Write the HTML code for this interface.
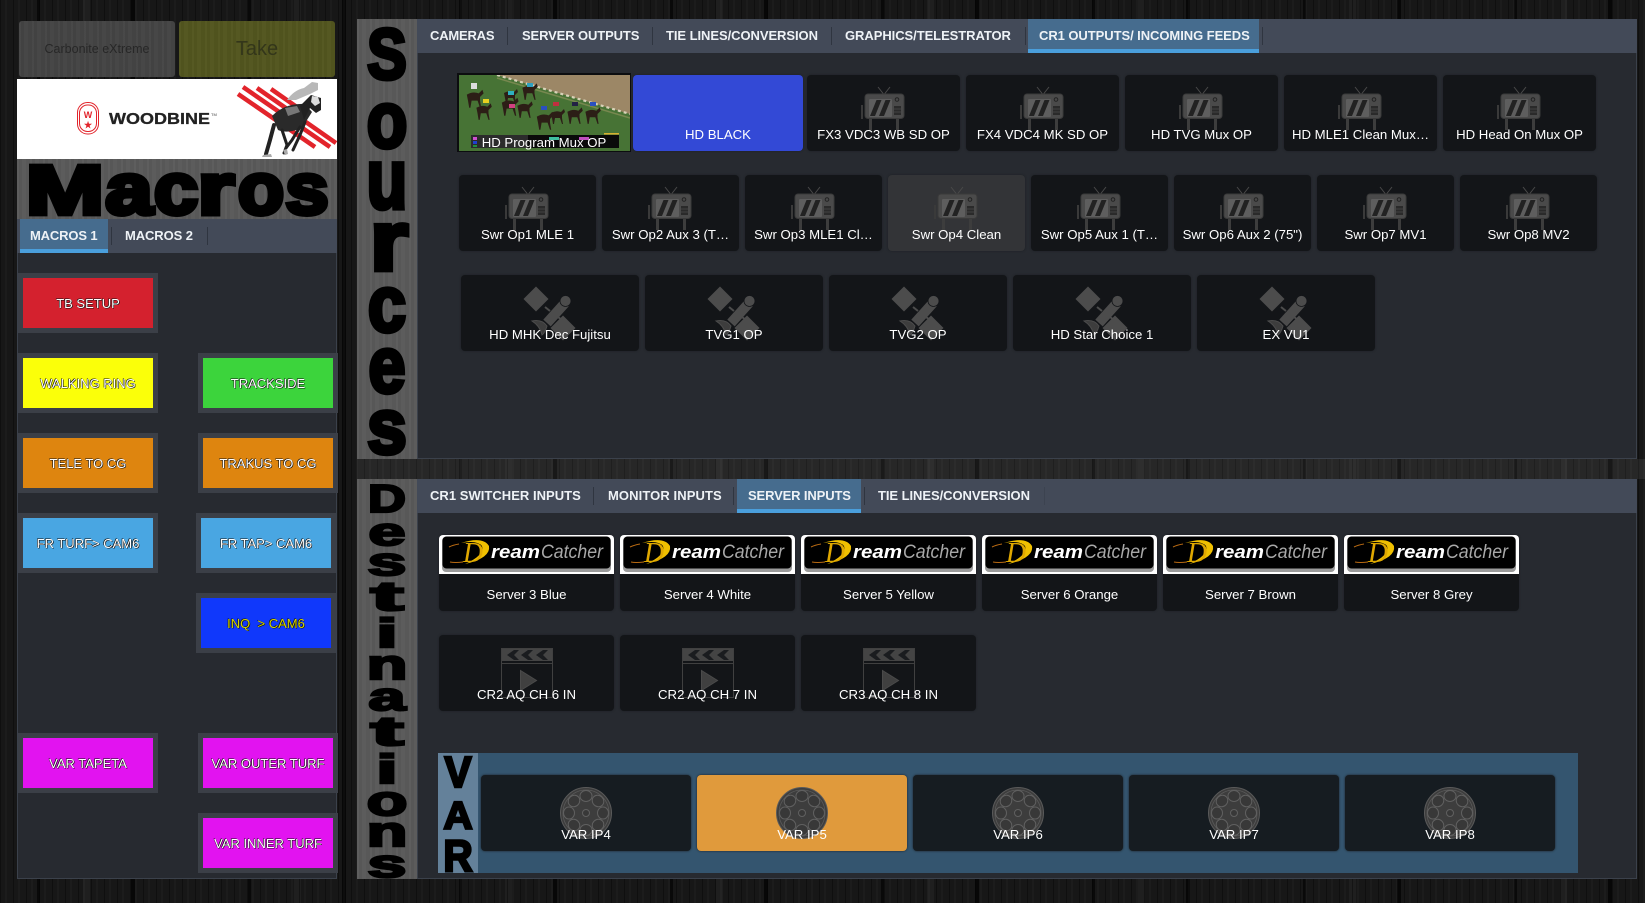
<!DOCTYPE html>
<html lang="en"><head><meta charset="utf-8"><title>Router</title>
<style>
html,body{margin:0;padding:0}
body{position:relative;width:1645px;height:903px;overflow:hidden;font-family:"Liberation Sans",sans-serif;background-color:#171717;
background-image:
repeating-linear-gradient(90deg,rgba(0,0,0,.35) 0 1px,rgba(0,0,0,0) 1px 5px,rgba(255,255,255,.025) 5px 7px,rgba(0,0,0,0) 7px 13px),
repeating-linear-gradient(90deg,rgba(0,0,0,0) 0 37px,rgba(0,0,0,.6) 37px 40px,rgba(0,0,0,0) 40px 83px,rgba(255,255,255,.035) 83px 90px,rgba(0,0,0,0) 90px 131px,rgba(0,0,0,.7) 131px 135px,rgba(0,0,0,0) 135px 211px)}
div,span,svg{box-sizing:border-box}
.a{position:absolute}
.wood{background-color:#5a5a5a;background-image:repeating-linear-gradient(90deg,rgba(255,255,255,.025) 0 2px,rgba(0,0,0,.03) 2px 5px,rgba(255,255,255,.012) 5px 9px,rgba(0,0,0,.025) 9px 13px)}
.grain{background-image:repeating-linear-gradient(90deg,rgba(255,255,255,.02) 0 2px,rgba(0,0,0,.04) 2px 5px,rgba(255,255,255,.012) 5px 9px,rgba(0,0,0,.03) 9px 13px)}
.bar{position:absolute;background:#434a58}
.panel{position:absolute;background:#272a30;border:1px solid #3b414b;border-top:0}
.tab{position:absolute;top:8px;font-weight:bold;font-size:13px;line-height:18px;color:#eef2f6;white-space:nowrap}
.sep{position:absolute;top:8px;width:1px;height:18px;background:#2f3540}
.act{position:absolute;top:0;height:34px;background:#466c8e;border-bottom:4px solid #4a9fdc}
.t{position:absolute;height:76px;background:#131518;border-radius:4px;box-shadow:0 0 2px #1c1f24;overflow:hidden}
.t b{position:absolute;left:0;right:0;top:52px;font-weight:normal;font-size:13.200px;line-height:16px;color:#fff;text-align:center;white-space:nowrap}
.t svg{position:absolute;left:50%}
.tv{width:48px;height:46px;margin-left:-23.500px;top:11px}
.sat{width:60px;height:68px;margin-left:-30px;top:0}
.cl{width:56px;height:54px;margin-left:-28px;top:12px}
.re{width:60px;height:60px;margin-left:-30px;top:8px}
.m{position:absolute;width:140px;height:60px;background:#3b3f47;padding:5px}
.m span{display:block;height:50px;line-height:51px;text-align:center;font-size:13px;color:#fff;white-space:nowrap;text-shadow:.6px .6px 0 #111,-.6px -.6px 0 #111}
</style></head>
<body>
<svg width="0" height="0" style="position:absolute">
<defs>
<symbol id="tv" viewBox="0 0 48 46">
<path d="M18 1l5.500 7M30 1l-5.500 7" stroke="#4a4a4a" stroke-width="1" fill="none"/>
<rect x="1" y="19" width="2" height="14" fill="#3a3a3a"/>
<rect x="9" y="32" width="3" height="12" fill="#3d3d3d"/><rect x="36" y="32" width="3" height="12" fill="#3d3d3d"/>
<rect x="5" y="8" width="39" height="24.500" rx="3" fill="#4a4a4a" stroke="#3a3a3a"/>
<rect x="9" y="13" width="23" height="18" rx="1" fill="#5e5e5e"/>
<path d="M10 30l6.500-16h5l-6.500 16zM19 30l6.500-16h5l-6.500 16z" fill="#222"/>
<circle cx="37" cy="13.500" r="1.800" fill="none" stroke="#222" stroke-width="1"/>
<rect x="34" y="20" width="7" height="9" fill="#2a2a2a"/><path d="M34 23h7M34 26h7" stroke="#4a4a4a" stroke-width=".8"/>
</symbol>
<symbol id="sat" viewBox="0 0 60 68">
<path d="M16 11.500l12.500 12.500l-12.500 12.500l-12.500-12.500z" fill="#4c4c4c"/>
<path d="M43 40.500l12.500 12.500l-12.500 12.500l-12.500-12.500z" fill="#4c4c4c"/>
<path d="M27 48L45 28" stroke="#4c4c4c" stroke-width="10" fill="none"/>
<circle cx="45.500" cy="26" r="5.500" fill="#4c4c4c" stroke="#131518" stroke-width=".8"/>
<path d="M25 32l5 4M38 42l4 3" stroke="#4c4c4c" stroke-width="2"/>
<path d="M12 46q10-2 15 5q-2 7-5 9q-2-9-10-14z" fill="#3d3d3d" stroke="#4c4c4c"/>
</symbol>
<symbol id="cl" viewBox="0 0 56 54">
<rect x="2.500" y="1.500" width="51" height="49" fill="none" stroke="#404040"/>
<rect x="3" y="2" width="50" height="12" fill="#444"/>
<path d="M15 3l-7 5 7 5h5l-5-5 5-5zM29 3l-7 5 7 5h5l-5-5 5-5zM44 3l-7 5 7 5h5l-5-5 5-5z" fill="#1a1c1f"/>
<path d="M3 16.500h50" stroke="#404040"/>
<path d="M21.500 23.500l16 10-16 10z" fill="#404040" stroke="#4a4a4a"/>
</symbol>
<symbol id="re" viewBox="0 0 60 60">
<circle cx="30" cy="30" r="25.500" fill="#3d3d3d" stroke="#5a5a5a"/>
<circle cx="30" cy="30" r="23" fill="none" stroke="#5a5a5a" stroke-width=".8"/>
<g fill="#383838" stroke="#606060" stroke-width="1">
<ellipse cx="30" cy="13" rx="6" ry="5.500"/><ellipse cx="42" cy="18" rx="6" ry="5.500" transform="rotate(45 42 18)"/><ellipse cx="47" cy="30" rx="5.500" ry="6"/><ellipse cx="42" cy="42" rx="6" ry="5.500" transform="rotate(-45 42 42)"/>
<ellipse cx="30" cy="47" rx="6" ry="5.500"/><ellipse cx="18" cy="42" rx="6" ry="5.500" transform="rotate(45 18 42)"/><ellipse cx="13" cy="30" rx="5.500" ry="6"/><ellipse cx="18" cy="18" rx="6" ry="5.500" transform="rotate(-45 18 18)"/>
</g>
<circle cx="30" cy="30" r="3.500" fill="#383838" stroke="#606060"/>
</symbol>
<symbol id="dc" viewBox="0 0 175 39">
<rect width="175" height="39" fill="#fff"/>
<rect x="3" y="2" width="169" height="35" rx="4" fill="#9a9a9a"/>
<rect x="3.500" y="1.500" width="168" height="32" rx="4" fill="#000"/>
<path d="M20 9q-6 1-10 3M24 27q-8 1-13 0" stroke="#b96a12" stroke-width="1" fill="none"/>
<path d="M22 8Q44 1 50 11Q52 23 26 29Q46 20 43 11Q38 5 22 8z" fill="#f0c000"/>
<text x="24" y="27" font-family="Liberation Serif" font-style="italic" font-size="28" fill="#e0a800" textLength="20" lengthAdjust="spacingAndGlyphs">D</text>
<text x="52" y="23" font-family="Liberation Sans" font-weight="bold" font-style="italic" font-size="18" fill="#fff" textLength="49" lengthAdjust="spacingAndGlyphs">ream</text>
<text x="102" y="23" font-family="Liberation Sans" font-style="italic" font-size="19" fill="#a8a8a8" textLength="62" lengthAdjust="spacingAndGlyphs">Catcher</text>
</symbol>
<symbol id="hs" viewBox="0 0 16 20">
<path d="M2 8q5-3 10-1l3-3 1 3-3 3v3l1 6h-1l-2-6H6l-1 6H4l-1-6z" fill="#2c1e16"/>
</symbol>
</defs>
</svg>

<!-- lighter wood band between panels -->
<div class="a" style="left:357px;top:459px;width:1288px;height:20px;background:rgba(255,255,255,.07)"></div>

<!-- top buttons -->
<div class="a grain" style="left:19px;top:21px;width:156px;height:56px;background-color:#454545;border-radius:3px;text-align:center;line-height:56px;font-size:12.500px;color:#272727">Carbonite eXtreme</div>
<div class="a grain" style="left:179px;top:21px;width:156px;height:56px;background-color:#53561f;border-radius:3px;text-align:center;line-height:56px;font-size:20px;color:#33361a">Take</div>

<!-- woodbine banner -->
<svg class="a" style="left:17px;top:79px" width="320" height="80" viewBox="17 79 320 80">
<rect x="17" y="79" width="320" height="80" fill="#fff"/>
<rect x="77.500" y="102.500" width="21" height="31.500" rx="10" fill="none" stroke="#e2242b" stroke-width="1"/>
<rect x="79.500" y="105" width="17" height="26.500" rx="8" fill="none" stroke="#e2242b" stroke-width="1"/>
<text x="88" y="118" font-size="9" font-weight="bold" fill="#e2242b" text-anchor="middle">W</text>
<text x="88" y="128" font-size="9" font-weight="bold" fill="#e2242b" text-anchor="middle">★</text>
<text x="109" y="124" font-family="Liberation Sans" font-size="15.500" font-weight="bold" fill="#222" stroke="#222" stroke-width=".3" textLength="101" lengthAdjust="spacingAndGlyphs">WOODBINE</text>
<text x="211" y="116" font-size="4" fill="#444">TM</text>
<g stroke="#e2242b" stroke-width="4.500" fill="none">
<path d="M238 94L315 147M243 87L330 147M257 88L336 143M271 89L304 112"/>
</g>
<path d="M272 116Q285 103 305 104L312 112L302 128Q288 134 278 130Z" fill="#2a2a2a"/>
<path d="M300 106L311 95L321 98L321 110L316 113L310 108L304 120Z" fill="#222"/>
<path d="M312 96l6 1 2 6-5 3-4-4z" fill="#ddd"/>
<g stroke="#222" fill="none" stroke-linecap="round">
<path d="M274 125L270 140L266 154" stroke-width="4"/>
<path d="M282 130L287 145L284 153" stroke-width="3"/>
<path d="M300 127L292 140L286 148" stroke-width="3"/>
<path d="M305 122L300 135L293 150" stroke-width="3"/>
</g>
<path d="M287 100Q294 90 304 88L312 82L318 83L318 90L310 94L296 100Z" fill="#b8b8b8"/>
<path d="M283 150l2 5 3-1-1-5zM263 155l8-1 1 3-10 0z" fill="#aaa"/>
<path d="M285 108l12-2 3 6-12 4z" fill="#777"/>
</svg>

<!-- macros heading -->
<div class="a wood" style="left:17px;top:159px;width:320px;height:60px"></div>

<!-- macros panel -->
<div class="bar" style="left:17px;top:219px;width:320px;height:34px">
<div class="act" style="left:3px;width:88px"></div>
<span class="tab" style="left:13px;letter-spacing:-.15px">MACROS 1</span>
<div class="sep" style="left:94px"></div>
<span class="tab" style="left:108px;letter-spacing:-.1px">MACROS 2</span>
<div class="sep" style="left:190px"></div>
</div>
<div class="panel" style="left:17px;top:253px;width:320px;height:626px"></div>
<div class="m" style="left:18px;top:273px"><span style="background:#d4212e">TB SETUP</span></div>
<div class="m" style="left:18px;top:353px"><span style="background:#fbff09">WALKING RING</span></div>
<div class="m" style="left:198px;top:353px"><span style="background:#3cd43c">TRACKSIDE</span></div>
<div class="m" style="left:18px;top:433px"><span style="background:#de850f">TELE TO CG</span></div>
<div class="m" style="left:198px;top:433px"><span style="background:#de850f">TRAKUS TO CG</span></div>
<div class="m" style="left:18px;top:513px"><span style="background:#49a6e2">FR TURF&gt; CAM6</span></div>
<div class="m" style="left:196px;top:513px"><span style="background:#49a6e2">FR TAP&gt; CAM6</span></div>
<div class="m" style="left:196px;top:593px"><span style="background:#1038fb;color:#d4d400">INQ &nbsp;&gt; CAM6</span></div>
<div class="m" style="left:18px;top:733px"><span style="background:#e213f0">VAR TAPETA</span></div>
<div class="m" style="left:198px;top:733px"><span style="background:#e213f0">VAR OUTER TURF</span></div>
<div class="m" style="left:198px;top:813px"><span style="background:#e213f0">VAR INNER TURF</span></div>

<!-- sources -->
<div class="a wood" style="left:357px;top:19px;width:60px;height:440px"></div>
<div class="bar" style="left:417px;top:19px;width:1220px;height:34px">
<div class="act" style="left:611px;width:231px"></div>
<span class="tab" style="left:13px;letter-spacing:-.2px">CAMERAS</span><div class="sep" style="left:90px"></div>
<span class="tab" style="left:105px;letter-spacing:-.12px">SERVER OUTPUTS</span><div class="sep" style="left:235px"></div>
<span class="tab" style="left:249px;letter-spacing:-.06px">TIE LINES/CONVERSION</span><div class="sep" style="left:414px"></div>
<span class="tab" style="left:428px;letter-spacing:-.06px">GRAPHICS/TELESTRATOR</span><div class="sep" style="left:608px"></div>
<span class="tab" style="left:622px;letter-spacing:-.06px">CR1 OUTPUTS/ INCOMING FEEDS</span><div class="sep" style="left:845px"></div>
</div>
<div class="panel" style="left:417px;top:53px;width:1220px;height:406px"></div>

<!-- thumbnail -->
<div class="a" style="left:457px;top:73px;width:174px;height:79px;background:#0c0d0f;padding:2px">
<svg width="171" height="76" viewBox="0 0 171 76" style="display:block">
<rect width="171" height="76" fill="#477335"/>
<path d="M38 0H171V39z" fill="#9c8766"/>
<path d="M38 0L171 39" stroke="#d8d2b8" stroke-width="2.200" stroke-dasharray="3 3"/>
<path d="M38 3L171 43" stroke="#77884f" stroke-width="1.500"/>
<g>
<use href="#hs" x="5" y="10" width="20" height="24"/><use href="#hs" x="15" y="24" width="18" height="22"/>
<use href="#hs" x="40" y="18" width="20" height="24"/><use href="#hs" x="42" y="10" width="18" height="20"/>
<use href="#hs" x="60" y="4" width="20" height="22"/><use href="#hs" x="56" y="22" width="18" height="22"/>
<use href="#hs" x="75" y="32" width="20" height="24"/><use href="#hs" x="90" y="28" width="16" height="24"/>
<use href="#hs" x="106" y="28" width="18" height="22"/><use href="#hs" x="124" y="28" width="18" height="22"/>
</g>
<g>
<rect x="12" y="8" width="6" height="6" fill="#ddd"/><rect x="24" y="24" width="6" height="4" fill="#e6d020"/>
<rect x="49" y="16" width="6" height="4" fill="#2fb0c0"/><rect x="50" y="29" width="6" height="4" fill="#d04080"/>
<rect x="68" y="8" width="6" height="4" fill="#2fa0c0"/><rect x="82" y="31" width="6" height="4" fill="#2a50c0"/>
<rect x="94" y="27" width="6" height="4" fill="#c03040"/><rect x="113" y="27" width="6" height="4" fill="#224"/>
<rect x="131" y="27" width="6" height="4" fill="#2a50c0"/>
</g>
<rect x="12" y="60" width="148" height="13" fill="#0a0a0a"/>
<rect x="12" y="60" width="57" height="13" fill="#2c2c2c"/>
<rect x="14" y="62" width="4" height="3" fill="#d050d0"/><rect x="14" y="66" width="4" height="3" fill="#2040d0"/><rect x="14" y="70" width="4" height="2" fill="#209040"/>
<rect x="145" y="58" width="15" height="1.500" fill="#d8b030"/>
<rect x="90" y="62" width="10" height="3" fill="#40c0a0"/><rect x="120" y="62" width="10" height="3" fill="#c050c0"/>
</svg>
<div class="a" style="left:0;right:0;top:62px;color:#fff;font-size:13.200px;line-height:16px;text-align:center;white-space:nowrap">HD Program Mux OP</div>
</div>

<!-- row 1 -->
<div class="t" style="left:633px;top:75px;width:170px;background:#3349d6"><b>HD BLACK</b></div>
<div class="t" style="left:807px;top:75px;width:153px"><svg class="tv"><use href="#tv"/></svg><b>FX3 VDC3 WB SD OP</b></div>
<div class="t" style="left:966px;top:75px;width:153px"><svg class="tv"><use href="#tv"/></svg><b>FX4 VDC4 MK SD OP</b></div>
<div class="t" style="left:1125px;top:75px;width:153px"><svg class="tv"><use href="#tv"/></svg><b>HD TVG Mux OP</b></div>
<div class="t" style="left:1284px;top:75px;width:153px"><svg class="tv"><use href="#tv"/></svg><b>HD MLE1 Clean Mux…</b></div>
<div class="t" style="left:1443px;top:75px;width:153px"><svg class="tv"><use href="#tv"/></svg><b>HD Head On Mux OP</b></div>
<!-- row 2 -->
<div class="t" style="left:459px;top:175px;width:137px"><svg class="tv"><use href="#tv"/></svg><b>Swr Op1 MLE 1</b></div>
<div class="t" style="left:602px;top:175px;width:137px"><svg class="tv"><use href="#tv"/></svg><b>Swr Op2 Aux 3 (T…</b></div>
<div class="t" style="left:745px;top:175px;width:137px"><svg class="tv"><use href="#tv"/></svg><b>Swr Op3 MLE1 Cl…</b></div>
<div class="t" style="left:888px;top:175px;width:137px;background:#333437"><svg class="tv"><use href="#tv"/></svg><b>Swr Op4 Clean</b></div>
<div class="t" style="left:1031px;top:175px;width:137px"><svg class="tv"><use href="#tv"/></svg><b>Swr Op5 Aux 1 (T…</b></div>
<div class="t" style="left:1174px;top:175px;width:137px"><svg class="tv"><use href="#tv"/></svg><b>Swr Op6 Aux 2 (75")</b></div>
<div class="t" style="left:1317px;top:175px;width:137px"><svg class="tv"><use href="#tv"/></svg><b>Swr Op7 MV1</b></div>
<div class="t" style="left:1460px;top:175px;width:137px"><svg class="tv"><use href="#tv"/></svg><b>Swr Op8 MV2</b></div>
<!-- row 3 -->
<div class="t" style="left:461px;top:275px;width:178px"><svg class="sat"><use href="#sat"/></svg><b>HD MHK Dec Fujitsu</b></div>
<div class="t" style="left:645px;top:275px;width:178px"><svg class="sat"><use href="#sat"/></svg><b>TVG1 OP</b></div>
<div class="t" style="left:829px;top:275px;width:178px"><svg class="sat"><use href="#sat"/></svg><b>TVG2 OP</b></div>
<div class="t" style="left:1013px;top:275px;width:178px"><svg class="sat"><use href="#sat"/></svg><b>HD Star Choice 1</b></div>
<div class="t" style="left:1197px;top:275px;width:178px"><svg class="sat"><use href="#sat"/></svg><b>EX VU1</b></div>

<!-- destinations -->
<div class="a wood" style="left:357px;top:479px;width:60px;height:400px"></div>
<div class="bar" style="left:417px;top:479px;width:1220px;height:34px">
<div class="act" style="left:320px;width:124px"></div>
<span class="tab" style="left:13px;letter-spacing:.03px">CR1 SWITCHER INPUTS</span><div class="sep" style="left:176px"></div>
<span class="tab" style="left:191px;letter-spacing:.1px">MONITOR INPUTS</span><div class="sep" style="left:316px"></div>
<span class="tab" style="left:331px;letter-spacing:-.13px">SERVER INPUTS</span><div class="sep" style="left:447px"></div>
<span class="tab" style="left:461px;letter-spacing:-.06px">TIE LINES/CONVERSION</span><div class="sep" style="left:627px;background:#3c4350"></div>
</div>
<div class="panel" style="left:417px;top:513px;width:1220px;height:366px"></div>

<div class="t" style="left:439px;top:535px;width:175px"><svg class="a" style="left:0;top:0;margin:0" width="175" height="39"><use href="#dc"/></svg><b>Server 3 Blue</b></div>
<div class="t" style="left:620px;top:535px;width:175px"><svg class="a" style="left:0;top:0;margin:0" width="175" height="39"><use href="#dc"/></svg><b>Server 4 White</b></div>
<div class="t" style="left:801px;top:535px;width:175px"><svg class="a" style="left:0;top:0;margin:0" width="175" height="39"><use href="#dc"/></svg><b>Server 5 Yellow</b></div>
<div class="t" style="left:982px;top:535px;width:175px"><svg class="a" style="left:0;top:0;margin:0" width="175" height="39"><use href="#dc"/></svg><b>Server 6 Orange</b></div>
<div class="t" style="left:1163px;top:535px;width:175px"><svg class="a" style="left:0;top:0;margin:0" width="175" height="39"><use href="#dc"/></svg><b>Server 7 Brown</b></div>
<div class="t" style="left:1344px;top:535px;width:175px"><svg class="a" style="left:0;top:0;margin:0" width="175" height="39"><use href="#dc"/></svg><b>Server 8 Grey</b></div>

<div class="t" style="left:439px;top:635px;width:175px"><svg class="cl"><use href="#cl"/></svg><b>CR2 AQ CH 6 IN</b></div>
<div class="t" style="left:620px;top:635px;width:175px"><svg class="cl"><use href="#cl"/></svg><b>CR2 AQ CH 7 IN</b></div>
<div class="t" style="left:801px;top:635px;width:175px"><svg class="cl"><use href="#cl"/></svg><b>CR3 AQ CH 8 IN</b></div>

<!-- VAR -->
<div class="a" style="left:438px;top:753px;width:1140px;height:120px;background:#34556f"></div>
<div class="a" style="left:438px;top:753px;width:40px;height:120px;background:#64819a"></div>
<div class="t" style="left:481px;top:775px;width:210px;background:#161c21"><svg class="re"><use href="#re"/></svg><b>VAR IP4</b></div>
<div class="t" style="left:697px;top:775px;width:210px;background:#e09a3c"><svg class="re"><use href="#re"/></svg><b>VAR IP5</b></div>
<div class="t" style="left:913px;top:775px;width:210px;background:#161c21"><svg class="re"><use href="#re"/></svg><b>VAR IP6</b></div>
<div class="t" style="left:1129px;top:775px;width:210px;background:#161c21"><svg class="re"><use href="#re"/></svg><b>VAR IP7</b></div>
<div class="t" style="left:1345px;top:775px;width:210px;background:#161c21"><svg class="re"><use href="#re"/></svg><b>VAR IP8</b></div>

<!-- headline lettering -->
<svg class="a" style="left:0;top:0;pointer-events:none" width="1645" height="903" viewBox="0 0 1645 903" font-family="Liberation Sans" font-weight="bold" font-size="70" fill="#000" stroke="#000" stroke-width="4" text-anchor="middle">
<g font-size="72" stroke-width="5">
<text transform="translate(65,214) scale(1.300,.96)">M</text>
<text transform="translate(129,214) scale(1.180,1)">a</text>
<text transform="translate(176,214) scale(1.100,1)">c</text>
<text transform="translate(216,214) scale(1.300,1)">r</text>
<text transform="translate(261,214) scale(1.050,1)">o</text>
<text transform="translate(307,214) scale(1.080,1)">s</text>
</g>
<text transform="translate(387,79) scale(.85,1.020)">S</text>
<text transform="translate(387,147) scale(.95,1.120)">o</text>
<text transform="translate(387,208) scale(.95,1.200)">u</text>
<text transform="translate(389,270) scale(1.400,1.200)">r</text>
<text transform="translate(387,331) scale(.98,1.120)">c</text>
<text transform="translate(387,392) scale(.95,1.120)">e</text>
<text transform="translate(387,453) scale(1.020,1.120)">s</text>

<text transform="translate(387,512) scale(.75,.56)">D</text>
<text transform="translate(387,545) scale(.95,.56)">e</text>
<text transform="translate(387,575) scale(1,.56)">s</text>
<text transform="translate(387,610) scale(1.400,.58)">t</text>
<text transform="translate(387,647) scale(1.100,.58)">i</text>
<text transform="translate(387,679) scale(.95,.6)">n</text>
<text transform="translate(387,710) scale(.95,.56)">a</text>
<text transform="translate(387,745) scale(1.400,.58)">t</text>
<text transform="translate(387,783) scale(1.100,.58)">i</text>
<text transform="translate(387,815) scale(.95,.6)">o</text>
<text transform="translate(387,846) scale(.95,.6)">n</text>
<text transform="translate(387,877) scale(1,.56)">s</text>

<text transform="translate(458,787) scale(.58,.62)">V</text>
<text transform="translate(458,829) scale(.58,.56)">A</text>
<text transform="translate(458,871) scale(.58,.64)">R</text>
</svg>
</body></html>
